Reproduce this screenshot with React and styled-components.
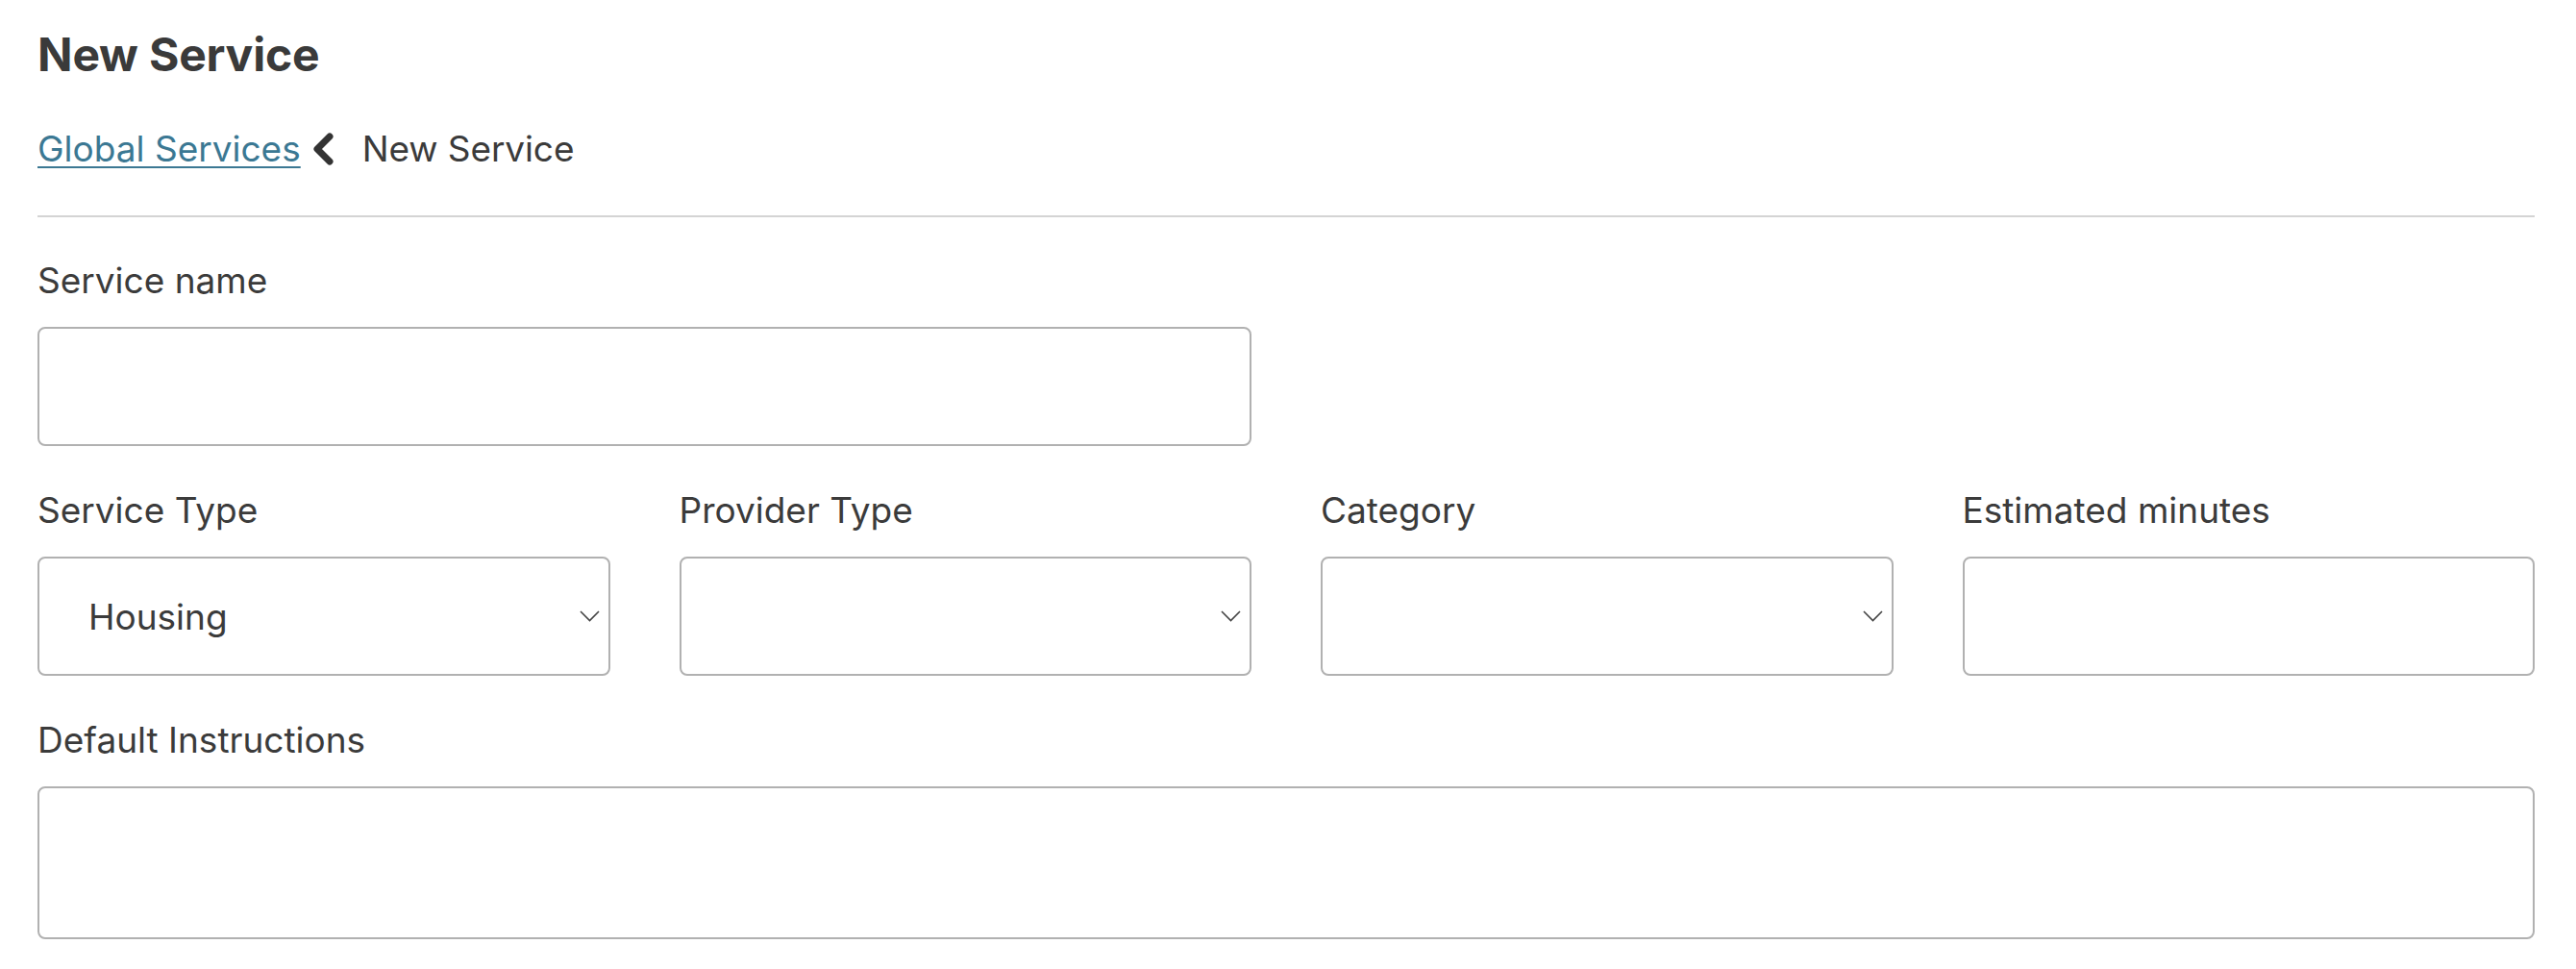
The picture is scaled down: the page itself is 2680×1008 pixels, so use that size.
import React from "react";
import styled, { createGlobalStyle } from "styled-components";

const GlobalStyle = createGlobalStyle`
  html, body {
    margin: 0;
    padding: 0;
    background: #ffffff;
  }
  body {
    font-family: Inter, "Noto Sans", "Liberation Sans", sans-serif;
    color: #3b3b3b;
  }
  * { box-sizing: border-box; }
`;

const Page = styled.main`
  padding: 28px 43px 40px 39px;
  width: 2680px;
`;

const Title = styled.h1`
  margin: 0;
  font-family: Inter, "Liberation Sans", sans-serif;
  font-weight: 700;
  font-size: 48px;
  line-height: 58px;
  color: #3a3a3a;
  letter-spacing: -0.2px;
`;

const Breadcrumb = styled.nav`
  margin-top: 47px;
  display: flex;
  align-items: center;
  height: 44px;
  font-size: 37px;
  line-height: 44px;
`;

const CrumbLink = styled.a`
  color: #3b7893;
  text-decoration: underline;
  text-decoration-thickness: 2px;
  text-underline-offset: 5px;
  cursor: pointer;
`;

const CrumbSep = styled.span`
  display: inline-flex;
  margin: 0 29px 0 11px;
  width: 24px;
  height: 36px;
  svg { display: block; }
`;

const CrumbCurrent = styled.span`
  color: #3b3b3b;
  letter-spacing: -0.1px;
`;

const Divider = styled.hr`
  margin: 47px 0 0 0;
  border: 0;
  height: 2px;
  background: #d4d4d4;
`;

const Form = styled.form`
  margin-top: 44px;
  display: flex;
  flex-direction: column;
  gap: 45px;
`;

const Row = styled.div`
  display: grid;
  grid-template-columns: repeat(4, 1fr);
  column-gap: 72px;
`;

const Field = styled.div`
  grid-column: span ${(p) => p.$span || 1};
  display: flex;
  flex-direction: column;
`;

const Label = styled.label`
  font-size: 37px;
  line-height: 44px;
  margin-bottom: 26px;
  color: #3b3b3b;
`;

const TextInput = styled.input`
  height: 124px;
  width: 100%;
  border: 2px solid #b1b1b1;
  border-radius: 8px;
  padding: 0 51px;
  font-family: inherit;
  font-size: 37px;
  color: #3b3b3b;
  background: #fff;
  outline: none;
`;

const TextArea = styled.textarea`
  height: 159px;
  width: 100%;
  border: 2px solid #b1b1b1;
  border-radius: 8px;
  padding: 20px 51px;
  font-family: inherit;
  font-size: 37px;
  color: #3b3b3b;
  background: #fff;
  resize: none;
  outline: none;
  display: block;
`;

const SelectWrap = styled.div`
  position: relative;
  width: 100%;
`;

const Select = styled.select`
  appearance: none;
  -webkit-appearance: none;
  height: 124px;
  width: 100%;
  border: 2px solid #b1b1b1;
  border-radius: 8px;
  padding: 0 60px 0 51px;
  font-family: Inter, "Liberation Sans", sans-serif;
  font-size: 37px;
  color: #3b3b3b;
  background: #fff;
  outline: none;
`;

const Caret = styled.span`
  position: absolute;
  right: 11px;
  top: 50%;
  transform: translateY(-50%);
  width: 21px;
  height: 12px;
  pointer-events: none;
  svg { display: block; }
`;

const ChevronLeft = () => (
  <svg width="24" height="36" viewBox="0 0 24 36">
    <polyline
      points="19,5 6,18 19,31"
      fill="none"
      stroke="#333333"
      strokeWidth="7"
      strokeLinecap="round"
      strokeLinejoin="round"
    />
  </svg>
);

const CaretDown = () => (
  <svg width="21" height="12" viewBox="0 0 21 12">
    <polyline
      points="1,1 10.5,10.5 20,1"
      fill="none"
      stroke="#444444"
      strokeWidth="1.6"
    />
  </svg>
);

const SelectField = ({ label, value, options }) => (
  <Field>
    <Label>{label}</Label>
    <SelectWrap>
      <Select defaultValue={value}>
        {options.map((o) => (
          <option key={o} value={o}>
            {o}
          </option>
        ))}
      </Select>
      <Caret>
        <CaretDown />
      </Caret>
    </SelectWrap>
  </Field>
);

export default function App() {
  return (
    <>
      <GlobalStyle />
      <Page>
        <Title>New Service</Title>
        <Breadcrumb>
          <CrumbLink>Global Services</CrumbLink>
          <CrumbSep>
            <ChevronLeft />
          </CrumbSep>
          <CrumbCurrent>New Service</CrumbCurrent>
        </Breadcrumb>
        <Divider />
        <Form onSubmit={(e) => e.preventDefault()}>
          <Row>
            <Field $span={2}>
              <Label>Service name</Label>
              <TextInput type="text" />
            </Field>
          </Row>
          <Row>
            <SelectField label="Service Type" value="Housing" options={["Housing", "Food", "Health"]} />
            <SelectField label="Provider Type" value="" options={[""]} />
            <SelectField label="Category" value="" options={[""]} />
            <Field>
              <Label>Estimated minutes</Label>
              <TextInput type="text" />
            </Field>
          </Row>
          <Row>
            <Field $span={4}>
              <Label>Default Instructions</Label>
              <TextArea />
            </Field>
          </Row>
        </Form>
      </Page>
    </>
  );
}
